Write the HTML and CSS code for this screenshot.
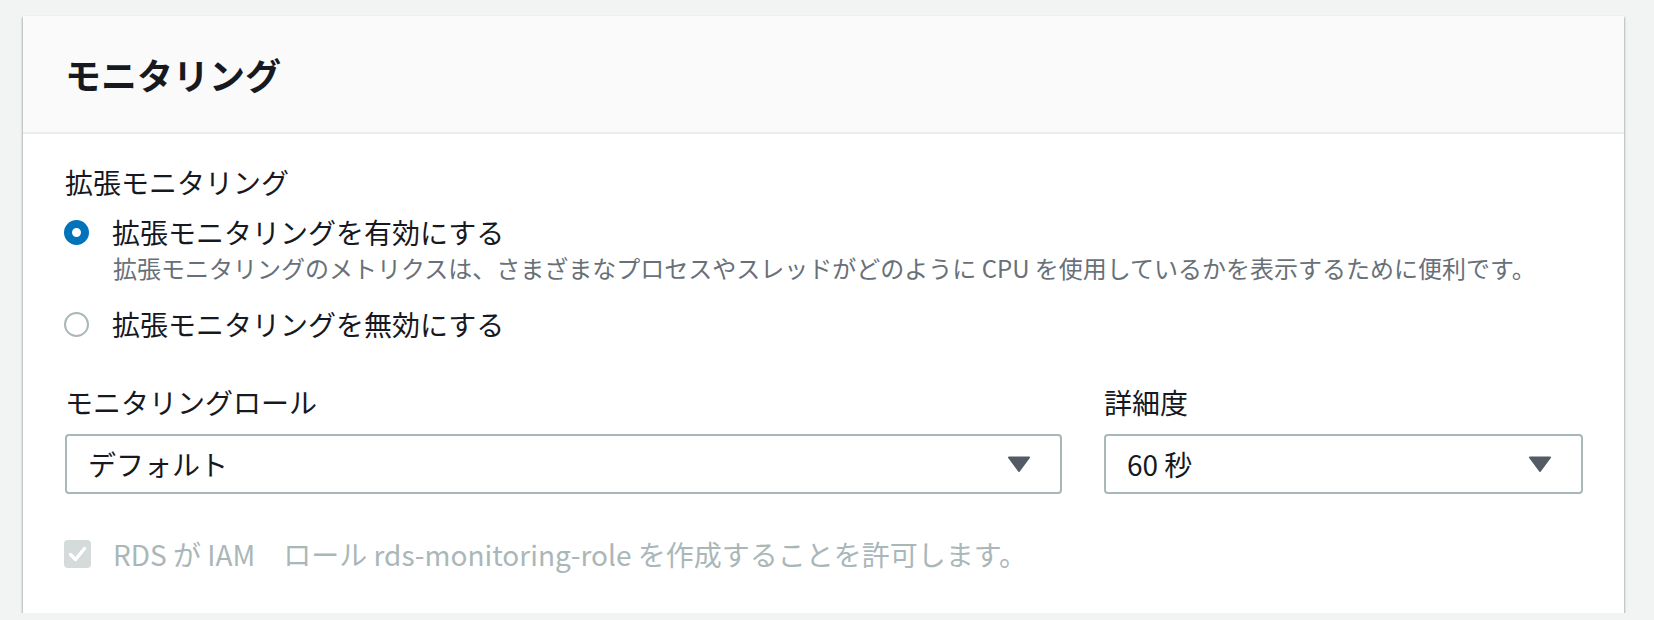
FILE: index.html
```html
<!DOCTYPE html>
<html lang="ja">
<head>
  <meta charset="UTF-8">
  <meta name="viewport" content="width=device-width, initial-scale=1.0">
  <title>モニタリング</title>
  <link rel="stylesheet" href="styles.css">
</head>
<body>

  <div class="card">
    <div class="card-header">
      <h2>モニタリング</h2>
    </div>

    <div class="card-body">
      <div class="field-label">拡張モニタリング</div>

      <label class="radio-row">
        <span class="radio checked"></span>
        <span class="radio-text">拡張モニタリングを有効にする</span>
      </label>
      <div class="radio-desc">拡張モニタリングのメトリクスは、さまざまなプロセスやスレッドがどのように CPU を使用しているかを表示するために便利です。</div>

      <label class="radio-row second">
        <span class="radio"></span>
        <span class="radio-text">拡張モニタリングを無効にする</span>
      </label>

      <div class="columns">
        <div class="column">
          <div class="field-label">モニタリングロール</div>
          <div class="select">
            <span>デフォルト</span>
            <svg class="caret" width="22" height="16" viewBox="0 0 22 16">
              <path d="M1 1.5 L21 1.5 L11 15 Z" fill="#545b64" stroke="#545b64" stroke-width="2" stroke-linejoin="round"/>
            </svg>
          </div>
        </div>
        <div class="column">
          <div class="field-label">詳細度</div>
          <div class="select">
            <span>60 秒</span>
            <svg class="caret" width="22" height="16" viewBox="0 0 22 16">
              <path d="M1 1.5 L21 1.5 L11 15 Z" fill="#545b64" stroke="#545b64" stroke-width="2" stroke-linejoin="round"/>
            </svg>
          </div>
        </div>
      </div>

      <label class="check-row">
        <span class="checkbox">
          <svg width="27" height="28" viewBox="0 0 27 28">
            <path d="M6.5 14.5 L11.5 19.5 L20.5 8.5" fill="none" stroke="#ffffff" stroke-width="3.5" stroke-linecap="round" stroke-linejoin="round"/>
          </svg>
        </span>
        <span class="check-text">RDS が IAM　ロール rds-monitoring-role を作成することを許可します。</span>
      </label>
    </div>
  </div>

</body>
</html>
```

FILE: styles.css
```css
body {
  font-family: "Noto Sans CJK JP", "Noto Sans", sans-serif;
  margin: 0;
  padding: 16px 30px 0 23px;
  background-color: #f2f3f3;
  color: #16191f;
}
.card {
  background-color: white;
  box-shadow: 0 2px 2px 0 rgba(0, 28, 36, 0.3), 1px 1px 2px 0 rgba(0, 28, 36, 0.15), -1px 1px 2px 0 rgba(0, 28, 36, 0.15);
}
.card-header {
  background-color: #fafafa;
  border-bottom: 2px solid #eaeded;
  height: 116px;
  padding: 0 42px;
  display: flex;
  align-items: center;
}
h2 {
  margin: 0;
  font-size: 36px;
  font-weight: 700;
  line-height: 44px;
}
.card-body {
  padding: 28px 41px 39px 42px;
  display: flex;
  flex-direction: column;
}
.field-label {
  font-size: 28px;
  line-height: 40px;
}
.radio-row {
  display: flex;
  align-items: center;
  margin-top: 10px;
  font-size: 28px;
  line-height: 40px;
}
.radio-row.second {
  margin-top: 20px;
}
.radio {
  width: 25px;
  height: 25px;
  box-sizing: border-box;
  border: 2px solid #aab7b8;
  border-radius: 50%;
  margin-right: 23px;
  margin-left: -1px;
  flex-shrink: 0;
}
.radio.checked {
  border: 8px solid #0073bb;
}
.radio-desc {
  font-size: 24px;
  line-height: 32px;
  color: #687078;
  padding-left: 48px;
}
.columns {
  display: grid;
  grid-template-columns: 1fr 479px;
  column-gap: 42px;
  margin-top: 38px;
}
.select {
  margin-top: 12px;
  height: 60px;
  box-sizing: border-box;
  border: 2px solid #aab7b8;
  border-radius: 4px;
  padding: 0 30px 0 21px;
  display: flex;
  align-items: center;
  justify-content: space-between;
  font-size: 28px;
}
.caret {
  display: block;
}
.check-row {
  display: flex;
  align-items: center;
  margin-top: 40px;
  font-size: 28px;
  line-height: 40px;
  color: #aab7b8;
}
.checkbox {
  width: 27px;
  height: 28px;
  background-color: #d5dbdb;
  border-radius: 4px;
  margin-right: 22px;
  margin-left: -1px;
}
.checkbox svg {
  display: block;
}
```
